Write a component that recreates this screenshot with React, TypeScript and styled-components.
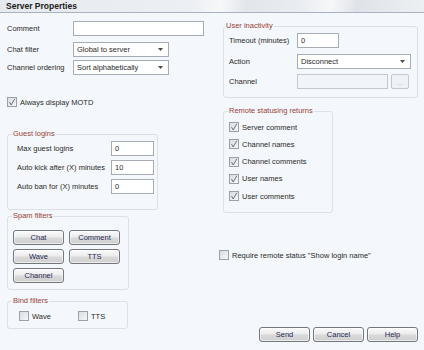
import React from "react";
import styled, { createGlobalStyle } from "styled-components";

const GlobalStyle = createGlobalStyle`
  html, body {
    margin: 0;
    padding: 0;
    background: #f4f7fb;
  }
`;

const Window = styled.div`
  width: 424px;
  height: 350px;
  background: #f4f7fb;
  font-family: "Liberation Sans", Arial, sans-serif;
  font-size: 7.5px;
  color: #2a2a2a;
  display: flex;
  flex-direction: column;
  overflow: hidden;
`;

const TitleBar = styled.div`
  height: 12px;
  line-height: 13px;
  padding-left: 6px;
  font-size: 8.5px;
  font-weight: bold;
  color: #202020;
  border-bottom: 1px solid #a9b3c0;
  background: linear-gradient(
    100deg,
    #e6e9ee 0%,
    #eceff3 45%,
    #f7f8fa 52%,
    #e2e6eb 58%,
    #e9ecf0 70%,
    #f6f7f9 78%,
    #dfe3e9 84%,
    #edf0f3 100%
  );
`;

const Body = styled.div`
  display: grid;
  grid-template-columns: 198px 200px;
  column-gap: 14px;
  padding: 8px 5px 0 7px;
  align-items: start;
`;

const Column = styled.div`
  display: flex;
  flex-direction: column;
`;

const Row = styled.div<{ $mt?: number; $h?: number }>`
  display: flex;
  align-items: center;
  height: ${({ $h }) => $h ?? 15}px;
  margin-top: ${({ $mt }) => $mt ?? 0}px;
`;

const Label = styled.span<{ $w: number }>`
  width: ${({ $w }) => $w}px;
  flex: none;
  white-space: nowrap;
`;

const TextBox = styled.input<{ $w: number; $disabled?: boolean }>`
  box-sizing: border-box;
  width: ${({ $w }) => $w}px;
  height: 15px;
  margin: 0;
  padding: 0 3px;
  border: 1px solid ${({ $disabled }) => ($disabled ? "#c3c9d1" : "#a5acb6")};
  background: ${({ $disabled }) => ($disabled ? "#f1f4f8" : "#ffffff")};
  font-family: inherit;
  font-size: 7.5px;
  color: #2a2a2a;
  outline: none;
`;

const Combo = styled.div<{ $w: number }>`
  box-sizing: border-box;
  width: ${({ $w }) => $w}px;
  height: 15px;
  display: flex;
  align-items: center;
  justify-content: space-between;
  padding: 0 5px 0 3px;
  border: 1px solid #a5acb6;
  background: #ffffff;
  white-space: nowrap;
`;

const Arrow = () => (
  <svg width="5" height="3" viewBox="0 0 5 3">
    <path d="M0 0 H5 L2.5 3 Z" fill="#4a4a4a" />
  </svg>
);

const Group = styled.fieldset<{ $w: number; $mt?: number; $ml?: number; $pad: string }>`
  box-sizing: border-box;
  width: ${({ $w }) => $w}px;
  margin: ${({ $mt }) => $mt ?? 0}px 0 0 ${({ $ml }) => $ml ?? 0}px;
  padding: ${({ $pad }) => $pad};
  min-width: 0;
  border: 1px solid #dbe1e8;
  border-radius: 3px;
`;

const Legend = styled.legend<{ $off: number }>`
  padding: 0 1px;
  margin-left: ${({ $off }) => $off}px;
  line-height: 10px;
  color: #983f38;
`;

const Stack = styled.div<{ $gap: number }>`
  display: flex;
  flex-direction: column;
  gap: ${({ $gap }) => $gap}px;
`;

const ButtonGrid = styled.div`
  display: grid;
  grid-template-columns: 51px 51px;
  column-gap: 5px;
  row-gap: 4px;
`;

const Button = styled.button<{ $w?: number }>`
  box-sizing: border-box;
  width: ${({ $w }) => $w ?? 51}px;
  height: 15px;
  margin: 0;
  padding: 0;
  border: 1px solid #73777e;
  border-radius: 3px;
  background: linear-gradient(#fbfbfb 0%, #ececec 45%, #d9d9d9 55%, #cfcfcf 100%);
  box-shadow: inset 0 0 0 1px rgba(255, 255, 255, 0.6);
  font-family: inherit;
  font-size: 7.5px;
  color: #1f2552;
`;

const SmallButton = styled.div`
  box-sizing: border-box;
  width: 18px;
  height: 15px;
  margin-left: 3px;
  border: 1px solid #c3c9d1;
  border-radius: 2px;
  background: #eef1f5;
  color: #a4a8ae;
  font-size: 6px;
  display: flex;
  align-items: flex-end;
  justify-content: center;
  padding-bottom: 2px;
`;

const CheckRow = styled.label<{ $w?: number; $mt?: number }>`
  display: flex;
  align-items: center;
  gap: 3px;
  height: 10px;
  width: ${({ $w }) => ($w ? `${$w}px` : "auto")};
  margin-top: ${({ $mt }) => $mt ?? 0}px;
  white-space: nowrap;
`;

const Box = styled.span`
  box-sizing: border-box;
  width: 10px;
  height: 10px;
  flex: none;
  border: 1px solid #98a1ac;
  background: linear-gradient(135deg, #d9dde2, #f6f7f8);
  display: flex;
  align-items: center;
  justify-content: center;
`;

const Check: React.FC<{ checked?: boolean; label: string; w?: number; mt?: number }> = ({
  checked,
  label,
  w,
  mt,
}) => (
  <CheckRow $w={w} $mt={mt}>
    <Box>
      {checked && (
        <svg width="8" height="8" viewBox="0 0 8 8">
          <path d="M1.5 4 L3.2 7 L6.8 0.8" stroke="#6d747d" strokeWidth="1" fill="none" />
        </svg>
      )}
    </Box>
    {label}
  </CheckRow>
);

const Footer = styled.div`
  display: flex;
  justify-content: flex-end;
  gap: 3px;
  margin-top: 67px;
  padding-right: 1px;
`;

const remoteItems = [
  "Server comment",
  "Channel names",
  "Channel comments",
  "User names",
  "User comments",
];

const App: React.FC = () => (
  <Window>
    <GlobalStyle />
    <TitleBar>Server Properties</TitleBar>
    <Body>
      <Column>
        <Row>
          <Label $w={66}>Comment</Label>
          <TextBox $w={131} readOnly defaultValue="" />
        </Row>
        <Row $mt={6}>
          <Label $w={66}>Chat filter</Label>
          <Combo $w={96}>
            Global to server
            <Arrow />
          </Combo>
        </Row>
        <Row $mt={3}>
          <Label $w={66}>Channel ordering</Label>
          <Combo $w={96}>
            Sort alphabetically
            <Arrow />
          </Combo>
        </Row>
        <Check checked label="Always display MOTD" mt={22} />

        <Group $w={151} $mt={22} $pad="2px 4px 15px 9px">
          <Legend $off={-5}>Guest logins</Legend>
          <Stack $gap={4}>
            <Row>
              <Label $w={94}>Max guest logins</Label>
              <TextBox $w={43} readOnly defaultValue="0" />
            </Row>
            <Row>
              <Label $w={94}>Auto kick after (X) minutes</Label>
              <TextBox $w={43} readOnly defaultValue="10" />
            </Row>
            <Row>
              <Label $w={94}>Auto ban for (X) minutes</Label>
              <TextBox $w={43} readOnly defaultValue="0" />
            </Row>
          </Stack>
        </Group>

        <Group $w={122} $mt={1} $pad="9px 5px 6px 5px">
          <Legend $off={-1}>Spam filters</Legend>
          <ButtonGrid>
            <Button>Chat</Button>
            <Button>Comment</Button>
            <Button>Wave</Button>
            <Button>TTS</Button>
            <Button>Channel</Button>
          </ButtonGrid>
        </Group>

        <Group $w={121} $mt={6} $pad="5px 5px 7px 11px">
          <Legend $off={-7}>Bind filters</Legend>
          <Row $h={10}>
            <Check label="Wave" w={59} />
            <Check label="TTS" />
          </Row>
        </Group>
      </Column>

      <Column>
        <Group $w={195} $ml={4} $pad="2px 6px 8px 5px">
          <Legend $off={-4}>User inactivity</Legend>
          <Row>
            <Label $w={68}>Timeout (minutes)</Label>
            <TextBox $w={42} readOnly defaultValue="0" />
          </Row>
          <Row $mt={6}>
            <Label $w={68}>Action</Label>
            <Combo $w={114}>
              Disconnect
              <Arrow />
            </Combo>
          </Row>
          <Row $mt={5}>
            <Label $w={68}>Channel</Label>
            <TextBox $w={91} $disabled readOnly defaultValue="" />
            <SmallButton>...</SmallButton>
          </Row>
        </Group>

        <Group $w={110} $ml={4} $mt={8} $pad="6px 4px 11px 5px">
          <Legend $off={-1}>Remote statusing returns</Legend>
          <Stack $gap={7.3}>
            {remoteItems.map((item) => (
              <Check key={item} checked label={item} />
            ))}
          </Stack>
        </Group>

        <Check label={'Require remote status "Show login name"'} mt={37} />

        <Footer>
          <Button>Send</Button>
          <Button>Cancel</Button>
          <Button>Help</Button>
        </Footer>
      </Column>
    </Body>
  </Window>
);

export default App;
